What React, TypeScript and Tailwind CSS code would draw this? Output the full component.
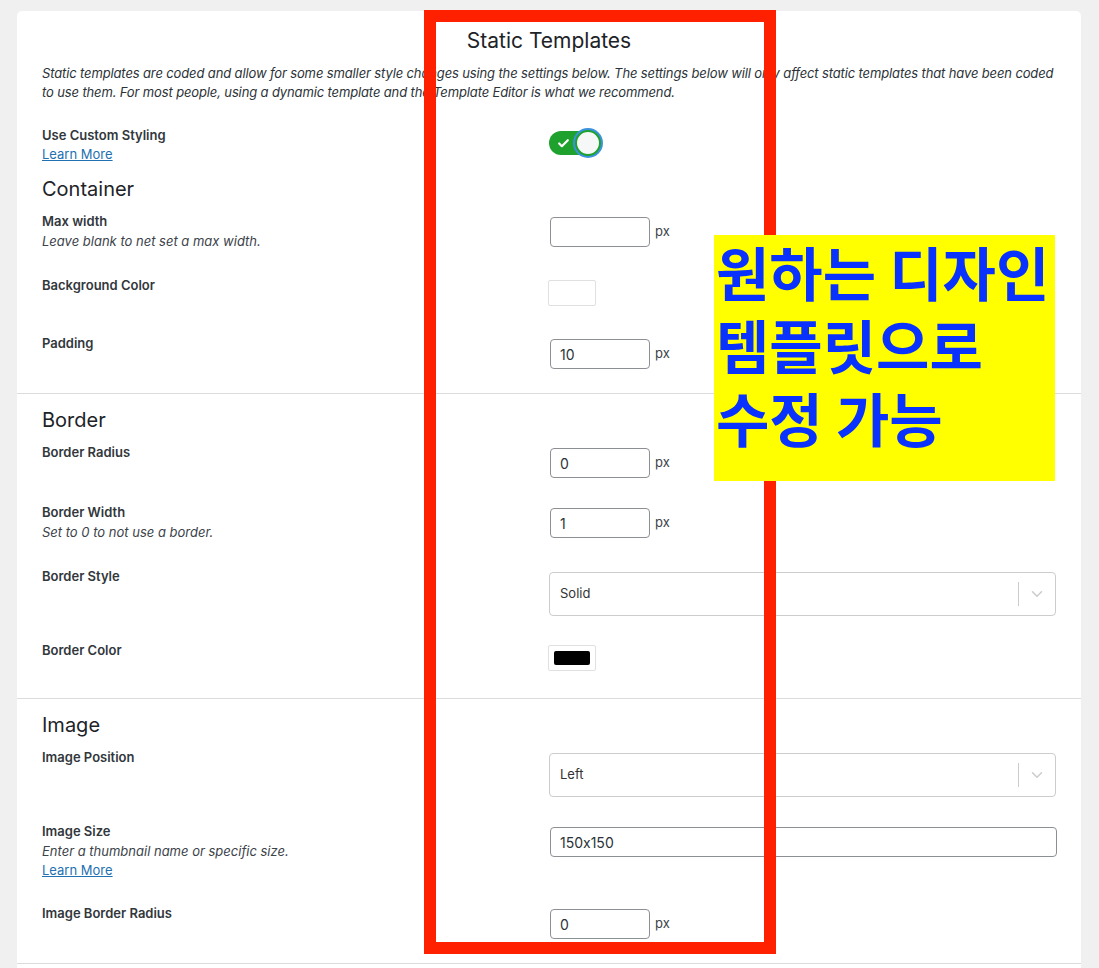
import { ChevronDown, Check } from "lucide-react";

const sans = "font-['Inter','Liberation_Sans',sans-serif] [font-feature-settings:'calt'_0]";

type RowProps = {
  label: string;
  desc?: string;
  learnMore?: boolean;
  children: React.ReactNode;
};

function Row({ label, desc, learnMore, children }: RowProps) {
  return (
    <div className="flex items-start pb-[24px]">
      <div className="w-[508px] shrink-0 text-[13px] text-[#32373c]">
        <div className="font-semibold leading-[20px]">{label}</div>
        {desc && <div className="italic leading-[20px] text-[#3c434a]">{desc}</div>}
        {learnMore && (
          <a href="#" className="block leading-[18px] text-[#2271b1] underline">
            Learn More
          </a>
        )}
      </div>
      <div className="flex-1">{children}</div>
    </div>
  );
}

function PxInput({ value }: { value?: string }) {
  return (
    <div className="mt-[6px] flex items-center gap-[5px]">
      <div className="flex h-[30px] w-[100px] items-center rounded-[4px] border border-[#8c8f94] bg-white px-[9px] text-[14px] text-[#2c3338]">
        {value}
      </div>
      <span className="text-[13px] text-[#3c434a]">px</span>
    </div>
  );
}

function Swatch({ color }: { color?: string }) {
  return (
    <div className="pb-[3px]">
      <div className="-ml-[2px] mt-[5px] flex h-[26px] w-[48px] items-center justify-center rounded-[2px] border border-[#e0e0e0] bg-white">
        {color && <div className="h-[14px] w-[36px] rounded-[2px] bg-black" />}
      </div>
    </div>
  );
}

function Select({ value }: { value: string }) {
  return (
    <div className="-ml-px mt-[6px] flex h-[44px] w-[507px] items-center rounded-[4px] border border-[#cccccc] bg-white">
      <span className="flex-1 pl-[10px] text-[13px] text-[#333]">{value}</span>
      <span className="h-[24px] w-px bg-[#cccccc]" />
      <span className="flex w-[36px] items-center justify-center text-[#cccccc]">
        <ChevronDown size={18} strokeWidth={2} />
      </span>
    </div>
  );
}

function Heading({ children, className = "" }: { children: React.ReactNode; className?: string }) {
  return <h3 className={`text-[20px] leading-[26px] text-[#1d2327] mb-[9px] ${className}`}>{children}</h3>;
}

export default function App() {
  return (
    <div className={`relative min-h-screen overflow-hidden bg-[#f0f0f1] pl-[17px] pr-[18px] pt-[11px] ${sans}`}>
      <div className="rounded-t-[5px] bg-white">
        {/* general */}
        <div className="border-b border-[#dcdcde] px-[25px] pt-[16px]">
          <h2 className="text-center text-[21px] leading-[28px] text-[#1d2327]">Static Templates</h2>
          <p className="mt-[9px] text-[13px] italic leading-[19px] tracking-[-0.13px] text-[#2c3338]">
            Static templates are coded and allow for some smaller style changes using the settings below. The
            settings below will only affect static templates that have been coded to use them. For most people,
            using a dynamic template and the Template Editor is what we recommend.
          </p>

          <div className="mt-[23px] flex items-start">
            <div className="w-[508px] shrink-0 text-[13px] text-[#32373c]">
              <div className="font-semibold leading-[20px]">Use Custom Styling</div>
              <a href="#" className="block leading-[18px] text-[#2271b1] underline">
                Learn More
              </a>
            </div>
            <div className="-ml-px mt-[6px] flex h-[24px] w-[44px] items-center rounded-full bg-[#1fa12e]">
              <Check size={13} strokeWidth={4} className="ml-[8px] text-white" />
              <div className="ml-auto -mr-[8px] h-[26px] w-[26px] rounded-full border-[2px] border-[#1fa12e] bg-[#f6f7f7] shadow-[0_0_0_2px_#3b93de]" />
            </div>
          </div>

          <Heading className="mt-[13px]">Container</Heading>
          <Row label="Max width" desc="Leave blank to net set a max width.">
            <PxInput />
          </Row>
          <Row label="Background Color">
            <Swatch />
          </Row>
          <Row label="Padding">
            <PxInput value="10" />
          </Row>
        </div>

        {/* border */}
        <div className="border-b border-[#dcdcde] px-[25px] pt-[13px]">
          <Heading>Border</Heading>
          <Row label="Border Radius">
            <PxInput value="0" />
          </Row>
          <Row label="Border Width" desc="Set to 0 to not use a border.">
            <PxInput value="1" />
          </Row>
          <Row label="Border Style">
            <Select value="Solid" />
          </Row>
          <Row label="Border Color">
            <Swatch color="#000" />
          </Row>
        </div>

        {/* image */}
        <div className="border-b border-[#dcdcde] px-[25px] pt-[13px]">
          <Heading>Image</Heading>
          <Row label="Image Position">
            <Select value="Left" />
          </Row>
          <Row label="Image Size" desc="Enter a thumbnail name or specific size." learnMore>
            <div className="mt-[6px] flex h-[30px] w-[507px] items-center rounded-[4px] border border-[#8c8f94] px-[9px] text-[14px] text-[#2c3338]">
              150x150
            </div>
          </Row>
          <Row label="Image Border Radius">
            <PxInput value="0" />
          </Row>
        </div>
        <div className="h-[40px]" />
      </div>

      {/* annotation overlays */}
      <div className="absolute left-[424px] top-[10px] h-[944px] w-[352px] border-[12px] border-[#ff2000]" />
      <div className="absolute left-[714px] top-[235px] h-[246px] w-[341px] bg-[#ffff00] pl-[2px]">
        <p className="font-['Noto_Sans_CJK_KR',sans-serif] text-[58px] font-bold leading-[73px] text-[#0a32ff]">
          원하는 디자인
          <br />
          템플릿으로
          <br />
          수정 가능
        </p>
      </div>
    </div>
  );
}
